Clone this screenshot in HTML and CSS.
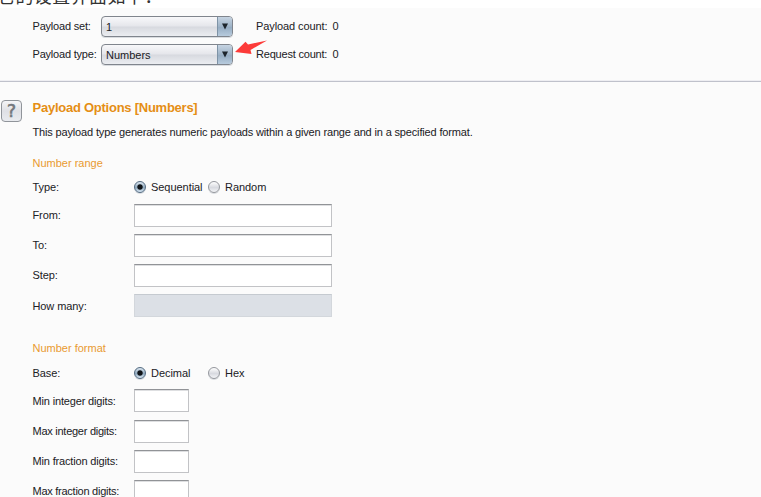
FILE: index.html
```html
<!DOCTYPE html>
<html lang="zh">
<head>
<meta charset="utf-8">
<title>Payload Options</title>
<link rel="stylesheet" href="styles.css">
</head>
<body>
<p class="intro"><span>它的设置界面如下：</span></p>
<main class="panel">
  <section class="sets">
    <div class="set-row">
      <span class="set-label">Payload set:</span>
      <div class="combo"><span class="value">1</span><span class="drop"><svg width="6" height="7" viewBox="0 0 6 7"><path d="M0 .5h6L3 6.5z" fill="#1c242b"/></svg></span></div>
      <span class="count-label">Payload count:</span><span>0</span>
    </div>
    <div class="set-row">
      <span class="set-label">Payload type:</span>
      <div class="combo"><span class="value">Numbers</span><span class="drop"><svg width="6" height="7" viewBox="0 0 6 7"><path d="M0 .5h6L3 6.5z" fill="#1c242b"/></svg></span></div>
      <span class="count-label tight">Request count:</span><span>0</span>
      <svg class="arrow" width="33" height="16" viewBox="0 0 33 16"><path d="M0 12 10.5 1.8 13 4.5 32 .5 15.5 10 16.5 14z" fill="#fc3b39"/></svg>
    </div>
  </section>
  <section class="options">
    <div class="help">?</div>
    <div class="content">
      <h1>Payload Options [Numbers]</h1>
      <p class="desc">This payload type generates numeric payloads within a given range and in a specified format.</p>
      <h2>Number range</h2>
      <div class="row choice"><span class="name">Type:</span><span class="option"><i class="radio on"></i><span>Sequential</span></span><span class="option"><i class="radio"></i><span>Random</span></span></div>
      <div class="row"><span class="name">From:</span><i class="field"></i></div>
      <div class="row"><span class="name">To:</span><i class="field"></i></div>
      <div class="row"><span class="name">Step:</span><i class="field"></i></div>
      <div class="row"><span class="name">How many:</span><i class="field disabled"></i></div>
      <h2 class="format">Number format</h2>
      <div class="row choice"><span class="name">Base:</span><span class="option"><i class="radio on"></i><span>Decimal</span></span><span class="option"><i class="radio"></i><span>Hex</span></span></div>
      <div class="row"><span class="name min">Min integer digits:</span><i class="field small"></i></div>
      <div class="row"><span class="name max">Max integer digits:</span><i class="field small"></i></div>
      <div class="row"><span class="name min">Min fraction digits:</span><i class="field small"></i></div>
      <div class="row"><span class="name max">Max fraction digits:</span><i class="field small"></i></div>
    </div>
  </section>
</main>
</body>
</html>
```
FILE: styles.css
```css
* { box-sizing: border-box; }
html, body { margin: 0; height: 497px; overflow: hidden; }
body { background: #fff; color: #202024; font: 11px/14px "Liberation Sans", Arial, sans-serif; white-space: nowrap; }
h1, h2, p { margin: 0; font-weight: normal; }
.intro { height: 8px; overflow: hidden; display: flex; align-items: flex-end; color: #333; font: 18px/24px "Noto Sans CJK SC", sans-serif; letter-spacing: .4px; }
.intro span { margin: 0 0 1px -3px; }
.panel { height: 489px; background: #fbfbfb; overflow: hidden; }
.sets { height: 74px; padding: 8px 0 0 32.5px; border-bottom: 1px solid #bfc1cb; box-shadow: inset 0 -1px #eeeef2; }
.set-row { display: flex; align-items: center; height: 21px; margin-bottom: 7px; position: relative; }
.set-row > span { margin-top: -1px; }
.set-label { width: 68.5px; letter-spacing: -.2px; }
.combo { width: 132px; height: 21px; display: flex; border: 1px solid #80858d; border-radius: 4px; overflow: hidden; background: linear-gradient(#f8f8fa, #e5e6eb 48%, #d7d9df 52%, #ebedf1); box-shadow: 0 1px #d9dce0; }
.value { flex: 1; padding: 3px 0 0 4px; }
.drop { width: 15px; border-left: 1px solid #7e93a6; background: linear-gradient(#c6d4e2, #9eb3c7 50%, #94abc1 52%, #b7cbdd); display: flex; align-items: center; justify-content: center; }
.count-label { width: 76.5px; margin-left: 23px; letter-spacing: -.1px; }
.tight { letter-spacing: -.2px; }
.arrow { position: absolute; left: 202.5px; top: -4px; }
.options { display: flex; }
.help { width: 21px; height: 22px; margin: 18px 10.5px 0 1px; border: 1px solid #90949a; border-radius: 4px; background: linear-gradient(#f5f5f7, #dfe0e5 50%, #e9ebef); color: #74777d; font: 17px/20px "DejaVu Sans", sans-serif; -webkit-text-stroke: .6px #74777d; text-align: center; }
.content { flex: 1; }
h1 { height: 38px; padding-top: 18px; color: #e58e15; font-size: 13px; line-height: 16px; font-weight: bold; letter-spacing: -.25px; }
.desc { height: 36px; padding-top: 5px; letter-spacing: -.155px; }
h2 { height: 22px; color: #e99a30; font-size: 11px; line-height: 14px; }
.row { display: flex; align-items: center; height: 30.2px; }
.name { width: 101.5px; letter-spacing: -.1px; }
.min { letter-spacing: -.16px; }
.max { letter-spacing: -.26px; }
.choice { height: 19px; margin-bottom: 3px; }
.choice span { position: relative; top: -.5px; }
.choice span span { top: 0; }
.option { display: flex; align-items: center; width: 74px; gap: 5px; letter-spacing: -.05px; }
.radio { width: 12px; height: 12px; border-radius: 50%; border: 1px solid #94979d; background: linear-gradient(#fff, #d8dae0 55%, #f3f4f7); box-shadow: 0 1px #dadde1; }
.radio.on { border-color: #536a80; background: radial-gradient(circle, #101418 0 2.2px, transparent 3.2px), linear-gradient(#dce7f1, #8fa8bd 55%, #d8e7f4); }
.field { width: 198px; height: 23px; background: #fff; border: 1px solid #c2c3c6; border-top-color: #919397; box-shadow: inset 0 1px #dedfe1; }
.disabled { background: #dce0e6; border-color: #d3d7dc; border-top-color: #c5cad0; box-shadow: none; }
.small { width: 55px; }
.format { height: 23px; margin-top: 20px; }
```
